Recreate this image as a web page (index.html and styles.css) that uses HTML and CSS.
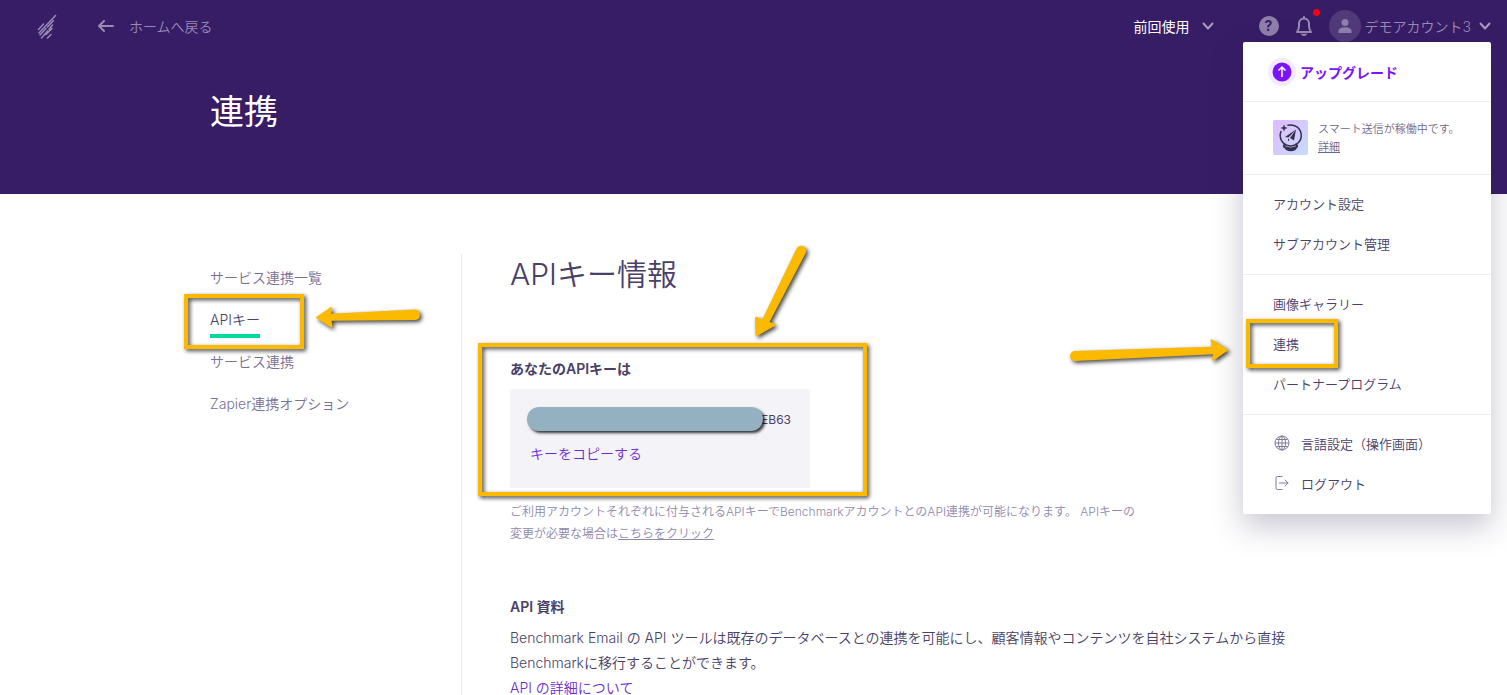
FILE: index.html
```html
<!doctype html>
<html lang="ja">
    <head>
        <meta charset="UTF-8" />
        <meta name="viewport" content="width=device-width, initial-scale=1.0" />
        <title>連携</title>
        <link rel="stylesheet" href="styles.css">
    </head>
    <body>
        <header class="header">
            <div class="topbar">
                <a class="logo" href="#" aria-label="Benchmark">
                    <svg width="20" height="26" viewBox="0 0 20 26" fill="none" stroke="currentColor" stroke-width="1.5" stroke-linecap="round">
                        <path d="M1.500 16.500 6.500 11M2 20 18.500 2.500M3 22 9 15.500M10.500 14 16.500 7.500M4.500 25 10.500 18M12 16.500 15.500 12M10.500 25 14 21.500M9 21.500 15 15.500" />
                    </svg>
                </a>
                <a class="back" href="#">
                    <svg width="18" height="14" viewBox="0 0 18 14" fill="none" stroke="currentColor" stroke-width="2" stroke-linecap="round" stroke-linejoin="round">
                        <path d="M16 7H2M7 2 2 7l5 5" />
                    </svg>
                    ホームへ戻る
                </a>
                <button class="recent" type="button">
                    前回使用
                    <svg width="12" height="8" viewBox="0 0 12 8" fill="none" stroke="currentColor" stroke-width="2" stroke-linecap="round" stroke-linejoin="round">
                        <path d="m1.500 1.500 4.500 5 4.500-5" />
                    </svg>
                </button>
                <a class="help" href="#" aria-label="ヘルプ">?</a>
                <button class="bell" type="button" aria-label="お知らせ">
                    <svg width="18" height="22" viewBox="0 0 18 22" fill="none" stroke="currentColor" stroke-width="2" stroke-linecap="round" stroke-linejoin="round">
                        <path d="M2 17c1.500-2 2-3.500 2-6V8.500a5 5 0 0 1 10 0V11c0 2.500.5 4 2 6zM9 3.500V2" />
                        <path d="M6.500 19.500c1 1.500 4 1.500 5 0z" fill="currentColor" stroke-width="1" />
                    </svg>
                    <span class="dot"></span>
                </button>
                <button class="account" type="button">
                    <span class="avatar">
                        <svg width="16" height="16" viewBox="0 0 16 16" fill="currentColor">
                            <circle cx="8" cy="4.500" r="3.500" />
                            <path d="M1.500 15v-2c0-5 13-5 13 0v2z" />
                        </svg>
                    </span>
                    デモアカウント3
                    <svg class="caret" width="12" height="8" viewBox="0 0 12 8" fill="none" stroke="currentColor" stroke-width="2" stroke-linecap="round" stroke-linejoin="round">
                        <path d="m1.500 1.500 4.500 5 4.500-5" />
                    </svg>
                </button>
            </div>
            <div class="container">
                <h1>連携</h1>
            </div>

            <nav class="menu" aria-label="アカウント">
                <a class="upgrade" href="#">
                    <svg width="28" height="28" viewBox="0 0 28 28" fill="none">
                        <circle cx="14" cy="14" r="14" fill="#f4eaff" />
                        <circle cx="14" cy="14" r="9.500" fill="#7c14fb" />
                        <path d="M14 19v-9.500M10.500 12.500 14 9l3.500 3.500" stroke="#fff" stroke-width="1.500" />
                    </svg>
                    アップグレード
                </a>
                <div class="smart">
                    <svg width="35" height="35" viewBox="0 0 35 35" fill="none">
                        <defs>
                            <linearGradient id="smart-bg" x1="0" y1="0" x2="1" y2="1">
                                <stop offset="0" stop-color="#e2b9fb" />
                                <stop offset="1" stop-color="#c4dcff" />
                            </linearGradient>
                        </defs>
                        <rect width="35" height="35" rx="2" fill="url(#smart-bg)" />
                        <g stroke="#35304f" stroke-width="1.500" stroke-linecap="round">
                            <path d="M15 5.300A10.500 10.500 0 1 1 8 11.500" />
                            <path d="M12 24.500c-1.500.8-1.500 2.300 0 2.800 3 1.200 8 1.200 11 0 1.500-.5 1.500-2 0-2.800M12.500 27.500c1 3.500 9.500 3.500 10.500 0" stroke-width="2" />
                        </g>
                        <path d="M11 4.500 12 7l2.500 1L12 9l-1 2.500L10 9 7.500 8 10 7z" fill="#35304f" />
                        <path d="m23 9.500-11 7.500 3.500.5zM23 9.500l-6 8.500 4 2.500zM15 18.500l1.500 1L15 21.500z" fill="#35304f" />
                    </svg>
                    <p>スマート送信が稼働中です。<br><a href="#">詳細</a></p>
                </div>
                <ul>
                    <li><a href="#">アカウント設定</a></li>
                    <li><a href="#">サブアカウント管理</a></li>
                </ul>
                <ul>
                    <li><a href="#">画像ギャラリー</a></li>
                    <li class="marked">
                        <a href="#">連携</a>
                        <span class="highlight highlight-menu"></span>
                        <svg class="arrow arrow-menu" width="170" height="34" viewBox="0 0 170 34">
                            <path d="M9 14 L146 9.700 L144.500 3 Q144.500 2 146 2.500 L162.500 13 L147.500 23.500 Q145.500 24 146 22.500 L147 17.300 L9 24 A5 5 0 0 1 9 14z" />
                        </svg>
                    </li>
                    <li><a href="#">パートナープログラム</a></li>
                </ul>
                <ul>
                    <li>
                        <a href="#">
                            <svg width="18" height="18" viewBox="0 0 18 18" fill="none" stroke="currentColor">
                                <circle cx="9" cy="9" r="7" />
                                <ellipse cx="9" cy="9" rx="3.500" ry="7" />
                                <path d="M9 2v14M2 9h14M3.500 5.500h11M3.500 12.500h11" />
                            </svg>
                            言語設定（操作画面）
                        </a>
                    </li>
                    <li>
                        <a href="#">
                            <svg width="18" height="18" viewBox="0 0 18 18" fill="none" stroke="currentColor" stroke-linecap="round" stroke-linejoin="round">
                                <path d="M9 2.500H4.500A1.500 1.500 0 0 0 3 4v10a1.500 1.500 0 0 0 1.500 1.500H9M6.500 9H15M12 6l3 3-3 3" />
                            </svg>
                            ログアウト
                        </a>
                    </li>
                </ul>
            </nav>
        </header>

        <main class="container columns">
            <nav class="sidebar" aria-label="連携">
                <ul>
                    <li><a href="#">サービス連携一覧</a></li>
                    <li class="marked">
                        <a class="active" href="#">APIキー</a>
                        <span class="highlight highlight-nav"></span>
                        <svg class="arrow arrow-nav" width="114" height="30" viewBox="0 0 114 30">
                            <path d="M4.500 12.500 L19.500 2.300 Q21.500 2 21 4 L20 8.700 L104 4.500 A5.300 5.300 0 0 1 104.500 15 L20.500 15.700 L21.500 21 Q21.500 23 19.500 22.300z" />
                        </svg>
                    </li>
                    <li><a href="#">サービス連携</a></li>
                    <li><a href="#">Zapier連携オプション</a></li>
                </ul>
            </nav>

            <section class="content">
                <h2>APIキー情報</h2>
                <div class="key marked">
                    <h3>あなたのAPIキーは</h3>
                    <div class="key-card">
                        <div class="key-value"><span class="redacted"></span>EB63</div>
                        <button class="copy" type="button">キーをコピーする</button>
                    </div>
                    <span class="highlight highlight-key"></span>
                    <svg class="arrow arrow-key" width="66" height="102" viewBox="0 0 66 102">
                        <path d="M49.500 8.500 A5 5 0 0 1 58.500 13.500 L22.500 82 L27 83.500 Q29 84.500 27.500 86 L10 96 Q8.500 96.500 8.500 95 L8 78 Q8 76 10 77 L15.500 79z" />
                    </svg>
                </div>
                <p class="note">
                    ご利用アカウントそれぞれに付与されるAPIキーでBenchmarkアカウントとのAPI連携が可能になります。 APIキーの変更が必要な場合は<a href="#">こちらをクリック</a>
                </p>
                <h3>API 資料</h3>
                <p class="text">
                    Benchmark Email の API ツールは既存のデータベースとの連携を可能にし、顧客情報やコンテンツを自社システムから直接Benchmarkに移行することができます。<br>
                    <a href="#">API の詳細について</a>
                </p>
            </section>
        </main>
    </body>
</html>
```
FILE: styles.css
```css
* {
    box-sizing: border-box;
}

body {
    margin: 0;
    height: 100vh;
    overflow: hidden;
    background: #fff;
    color: #484068;
    font-family: Inter, "Noto Sans CJK JP", sans-serif;
    font-size: 14px;
    font-weight: 350;
    display: flex;
    flex-direction: column;
}

h1,
h2,
h3,
p,
ul {
    margin: 0;
    padding: 0;
}

ul {
    list-style: none;
}

a {
    color: inherit;
    text-decoration: none;
}

button {
    border: 0;
    padding: 0;
    background: none;
    color: inherit;
    font: inherit;
    cursor: pointer;
}

svg {
    display: block;
    flex: none;
}

.container {
    width: 100%;
    max-width: 1087px;
    margin: 0 auto;
}

/* header */
.header {
    position: relative;
    z-index: 1;
    flex: none;
    height: 194px;
    background: #371c66;
    color: #9a8bb5;
}

.topbar {
    display: flex;
    align-items: center;
    height: 52px;
    padding: 0 16px 0 37px;
}

.logo {
    margin-right: 40px;
}

.back {
    display: flex;
    align-items: center;
    gap: 14px;
}

.recent {
    display: flex;
    align-items: center;
    gap: 12px;
    margin-left: auto;
    color: #fff;
    font-weight: 400;
}

.recent svg,
.caret {
    color: #a99cc0;
}

.help {
    width: 20px;
    height: 20px;
    margin-left: 45px;
    border-radius: 50%;
    background: #8f80aa;
    color: #371c66;
    font-size: 14px;
    font-weight: 700;
    line-height: 20px;
    text-align: center;
}

.bell {
    position: relative;
    margin-left: 16px;
}

.dot {
    position: absolute;
    top: -6px;
    right: -7px;
    width: 7px;
    height: 7px;
    border-radius: 50%;
    background: #f80012;
}

.account {
    display: flex;
    align-items: center;
    gap: 4px;
    margin-left: 16px;
}

.avatar {
    display: flex;
    align-items: center;
    justify-content: center;
    width: 32px;
    height: 32px;
    border-radius: 50%;
    background: #513a79;
    color: #8f80aa;
}

.caret {
    margin-left: 4px;
}

h1 {
    padding-top: 36px;
    color: #fff;
    font-size: 34px;
    font-weight: 400;
    line-height: 48px;
}

/* account menu */
.menu {
    position: absolute;
    top: 42px;
    right: 16px;
    width: 248px;
    border-radius: 2px;
    background: #fff;
    color: #484068;
    font-size: 13px;
    box-shadow: 0 12px 32px rgba(50, 38, 84, 0.28);
}

.menu > * {
    border-bottom: 1px solid #f0eff3;
}

.menu > :last-child {
    border-bottom: 0;
}

.upgrade {
    display: flex;
    align-items: center;
    gap: 4px;
    height: 60px;
    padding-left: 25px;
    color: #7c14fb;
    font-size: 14px;
    font-weight: 700;
}

.smart {
    display: flex;
    gap: 10px;
    padding: 18px 0 18px 30px;
    color: #6f678a;
    font-size: 11px;
    line-height: 18px;
}

.smart a {
    text-decoration: underline;
}

.menu ul {
    padding: 8px 0 11px;
}

.menu li a {
    display: flex;
    align-items: center;
    gap: 10px;
    height: 40px;
    padding-left: 30px;
}

.menu li svg:not(.arrow) {
    color: #827a9c;
}

/* sidebar */
.columns {
    display: flex;
    flex: 1;
    min-height: 0;
    padding-top: 60px;
}

.sidebar {
    flex: none;
    width: 252px;
    padding-top: 14px;
    border-right: 1px solid #ebeaf0;
    color: #796f93;
}

.sidebar li {
    height: 42px;
}

.sidebar a {
    display: inline-block;
    line-height: 20px;
}

.sidebar .active {
    padding-bottom: 4px;
    border-bottom: 4px solid #00d9a0;
    color: #484068;
}

/* content */
.content {
    flex: 1;
    padding-left: 48px;
}

h2 {
    margin-bottom: 63px;
    font-size: 30px;
    font-weight: 350;
    line-height: 40px;
}

h3 {
    font-size: 14px;
    font-weight: 600;
    line-height: 24px;
}

.key-card {
    width: 300px;
    height: 99px;
    margin-top: 8px;
    padding: 18px 19px 0 17px;
    border-radius: 2px;
    background: #f4f3f8;
}

.key-value {
    display: flex;
    align-items: center;
    justify-content: flex-end;
    font-size: 12px;
    font-weight: 400;
}

.redacted {
    position: relative;
    flex: 1;
    height: 24px;
    margin-right: -2px;
    border-radius: 12px;
    background: #93b1c1;
    box-shadow: 2px 2px 3px rgba(0, 0, 0, 0.8);
}

.copy {
    margin: 13px 0 0 3px;
    color: #6c2bd0;
    line-height: 20px;
}

.note {
    max-width: 636px;
    margin: 13px 0 50px;
    color: #8f88ad;
    font-size: 12px;
    line-height: 22px;
}

.note a {
    text-decoration: underline;
}

.text {
    margin-top: 6px;
    line-height: 25px;
}

.text a {
    color: #6c2bd0;
}

/* callouts */
.marked {
    position: relative;
}

.highlight,
.arrow {
    position: absolute;
    pointer-events: none;
    filter: drop-shadow(2px 2px 2px rgba(0, 0, 0, 0.75));
}

.highlight {
    border: 4px solid #fbba00;
}

.arrow {
    fill: #fbba00;
}

.highlight-nav {
    top: -16px;
    left: -26px;
    width: 120px;
    height: 55px;
}

.arrow-nav {
    top: -5px;
    left: 101px;
}

.highlight-key {
    top: -14px;
    left: -32px;
    width: 389px;
    height: 153px;
}

.arrow-key {
    top: -117px;
    left: 237px;
}

.highlight-menu {
    top: -4px;
    left: 3px;
    width: 92px;
    height: 49px;
}

.arrow-menu {
    top: 14px;
    right: 255px;
}
```
